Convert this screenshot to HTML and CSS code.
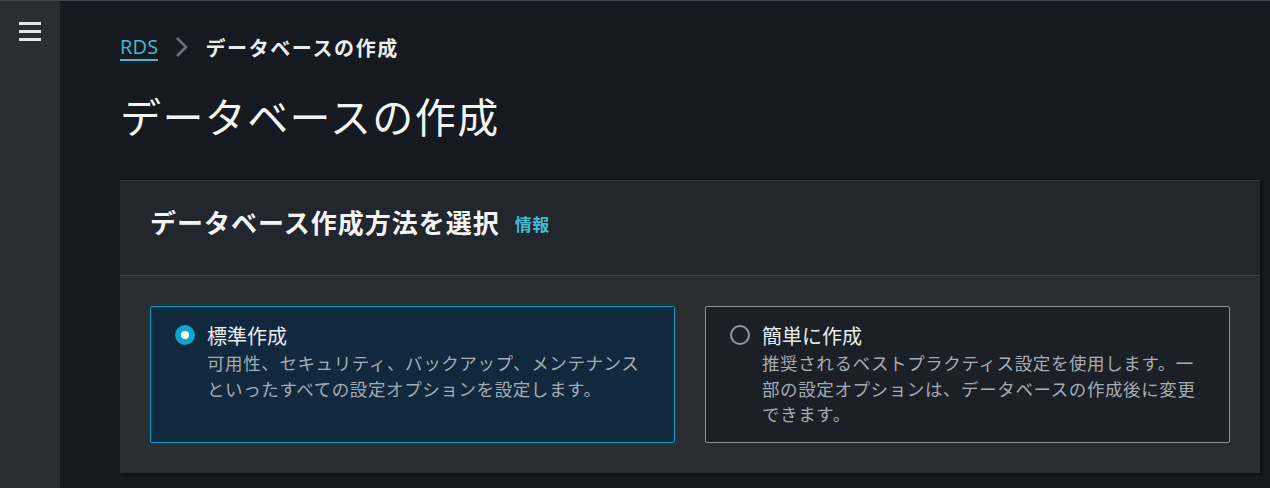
FILE: index.html
```html
<!DOCTYPE html>
<html lang="ja">
<head>
<meta charset="utf-8">
<link rel="stylesheet" href="styles.css">
</head>
<body>
<div class="app">
  <aside class="sidebar">
    <div class="hamburger"><span></span><span></span><span></span></div>
  </aside>
  <main class="main">
    <nav class="breadcrumbs">
      <a class="crumb-link">RDS</a>
      <svg class="chev" width="14" height="22" viewBox="0 0 14 22"><path d="M2 2 L11 11 L2 20" fill="none" stroke="#687078" stroke-width="2.6"/></svg>
      <span class="crumb-current">データベースの作成</span>
    </nav>
    <h1 class="page-title">データベースの作成</h1>
    <section class="panel">
      <header class="panel-header">
        <h2 class="panel-title">データベース作成方法を選択</h2>
        <a class="info">情報</a>
      </header>
      <div class="panel-body">
        <div class="tile selected">
          <span class="radio on"></span>
          <div class="tile-text">
            <div class="tile-title">標準作成</div>
            <div class="tile-desc">可用性、セキュリティ、バックアップ、メンテナンスといったすべての設定オプションを設定します。</div>
          </div>
        </div>
        <div class="tile">
          <span class="radio"></span>
          <div class="tile-text">
            <div class="tile-title">簡単に作成</div>
            <div class="tile-desc">推奨されるベストプラクティス設定を使用します。一部の設定オプションは、データベースの作成後に変更できます。</div>
          </div>
        </div>
      </div>
    </section>
  </main>
</div>
</body>
</html>
```
FILE: styles.css
```css
* { box-sizing: border-box; }
html, body { margin: 0; padding: 0; }
body {
  background: #16191f;
  font-family: "Noto Sans CJK JP", "Noto Sans", sans-serif;
  color: #eaeded;
  width: 1270px;
  height: 488px;
  overflow: hidden;
  border-top: 1px solid #414750;
}
.app { display: flex; height: 487px; }
.sidebar {
  width: 60px;
  background: #2a2e33;
  flex: none;
  padding: 21px 0 0 19px;
}
.hamburger { display: flex; flex-direction: column; gap: 5px; width: 22px; }
.hamburger span { display: block; height: 3px; background: #e3e5e6; }
.main { flex: 1; padding: 0 10px 0 60px; }
.breadcrumbs {
  display: flex;
  align-items: center;
  height: 30px;
  margin-top: 31px;
}
.crumb-link {
  color: #44b9d6;
  font-size: 20px;
  font-family: "Open Sans", "Noto Sans CJK JP", sans-serif;
  border-bottom: 2px solid #44b9d6;
  line-height: 24px;
  padding-top: 2px;
  letter-spacing: 0.2px;
}
.chev { margin: 0 16px 0 17px; }
.crumb-current {
  font-size: 20px;
  font-weight: 700;
  color: #eaeded;
  letter-spacing: 1.6px;
}
.page-title {
  font-size: 41px;
  font-weight: 400;
  color: #f2f3f3;
  margin: 25px 0 0 0;
  line-height: 56px;
  letter-spacing: 1.4px;
}
.panel {
  margin-top: 37px;
  background: #2a2e33;
  box-shadow: 2px 2px 3px rgba(0,0,0,0.45);
  border-top: 1px solid #33383f;
}
.panel-header {
  background: #22262d;
  height: 95px;
  border-bottom: 1px solid #414750;
  display: flex;
  align-items: center;
  padding: 0 30px 14px 30px;
}
.panel-title {
  margin: 0;
  font-size: 26px;
  font-weight: 700;
  color: #f2f3f3;
  letter-spacing: 1px;
}
.info {
  color: #44b9d6;
  font-weight: 700;
  font-size: 17px;
  margin-left: 15px;
  padding-top: 5px;
  letter-spacing: 0.5px;
}
.panel-body {
  display: grid;
  grid-template-columns: 525px 525px;
  gap: 30px;
  padding: 30px 30px 30px 30px;
}
.tile {
  height: 137px;
  border: 1px solid #879596;
  border-radius: 2px;
  background: #1b1f26;
  display: flex;
  padding: 17px 20px 0 24px;
  gap: 12px;
}
.tile.selected {
  border-color: #00a1c9;
  background: #12283d;
}
.radio {
  flex: none;
  width: 20px;
  height: 20px;
  border-radius: 50%;
  border: 2px solid #8d99a8;
  margin-top: 1px;
}
.radio.on {
  border: 6px solid #0ba5d0;
  background: #ffffff;
}
.tile-title {
  font-size: 20px;
  line-height: 24px;
  color: #eaeded;
}
.tile-desc {
  margin-top: 2px;
  font-size: 17.5px;
  line-height: 25.5px;
  color: #a4adb5;
  letter-spacing: 0.6px;
}
```
